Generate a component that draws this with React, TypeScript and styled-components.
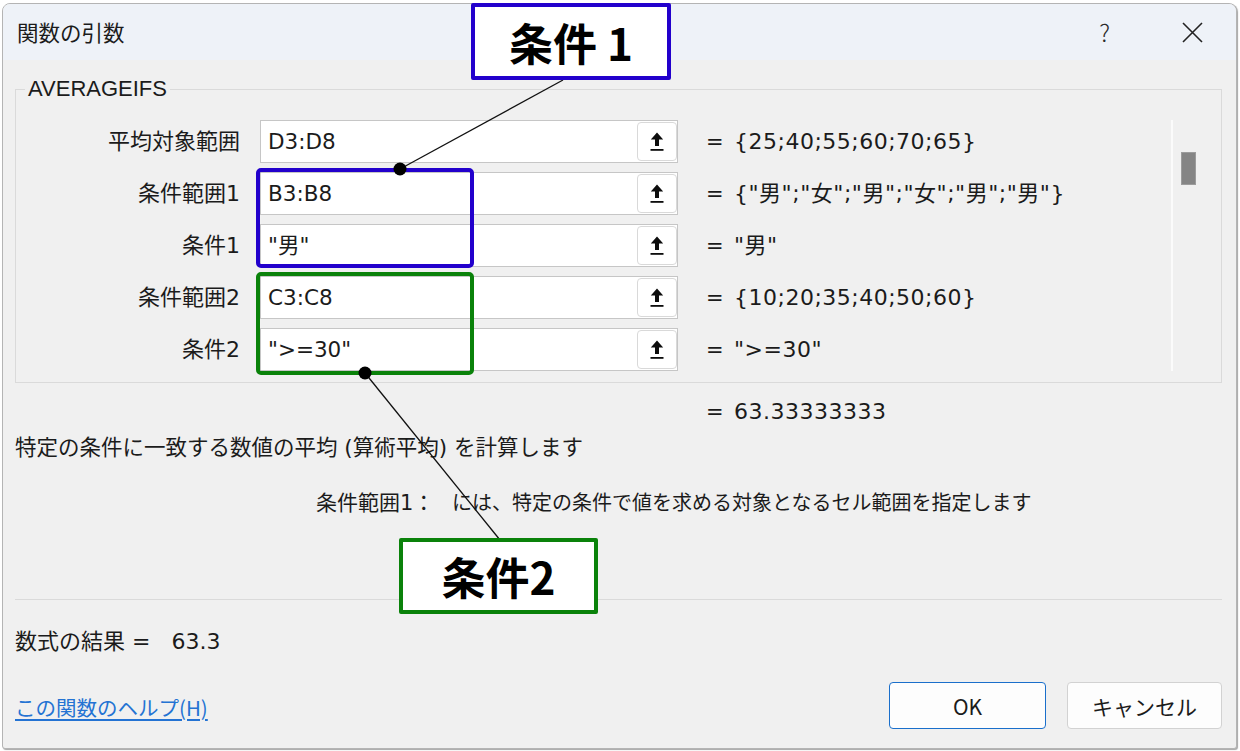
import React from 'react';
import styled, { createGlobalStyle } from 'styled-components';

const GlobalStyle = createGlobalStyle`
  html, body { margin: 0; padding: 0; background: #ffffff; }
  body {
    width: 1240px; height: 751px; overflow: hidden;
    font-family: "DejaVu Sans", "Noto Sans CJK JP", sans-serif;
    color: #1b1b1b;
  }
  * { box-sizing: border-box; }
`;

const Page = styled.div`
  position: relative;
  width: 1240px;
  height: 751px;
  padding: 3px 3px 2px 2px;
  display: flex;
`;

const Dialog = styled.div`
  flex: 1;
  display: flex;
  flex-direction: column;
  border: 1px solid #b4b4b4;
  border-radius: 8px 8px 3px 3px;
  background: #f0f0f0;
  box-shadow: 1px 1px 1px rgba(0, 0, 0, 0.35);
  overflow: hidden;
`;

const TitleBar = styled.div`
  height: 56px;
  flex: none;
  display: flex;
  align-items: center;
  padding: 0 33px 0 14px;
  background: #eef2f8;
`;

const TitleText = styled.div`
  flex: 1;
  font-size: 21.5px;
  line-height: 26px;
  font-family: "Noto Sans CJK JP", sans-serif;
`;

const HelpGlyph = styled.div`
  font-family: "Noto Sans CJK JP", sans-serif;
  font-weight: 300;
  font-size: 24px;
  line-height: 26px;
  color: #2a2a2a;
  margin-right: 72px;
`;

const CloseIcon = styled.svg`
  width: 21px;
  height: 21px;
  display: block;
`;

const Body = styled.div`
  flex: 1;
  display: flex;
  flex-direction: column;
  padding: 0 14px 0 12px;
`;

const Group = styled.fieldset`
  margin: 17px 0 0;
  padding: 19px 0 11px 0;
  border: 1px solid #dadada;
  display: flex;
  min-width: 0;
`;

const Legend = styled.legend`
  margin-left: 9px;
  padding: 0 3px;
  font-size: 22px;
  line-height: 24px;
  font-family: "Liberation Sans", "Noto Sans CJK JP", sans-serif;
  color: #1b1b1b;
`;

const Rows = styled.div`
  flex: 1;
  display: flex;
  flex-direction: column;
  gap: 9px;
`;

const Row = styled.div`
  height: 43px;
  display: flex;
  align-items: center;
`;

const Label = styled.div`
  width: 224px;
  text-align: right;
  font-size: 22px;
  line-height: 26px;
  margin-right: 20px;
  white-space: nowrap;
`;

const InputBox = styled.div`
  width: 418px;
  height: 43px;
  display: flex;
  align-items: center;
  padding: 0 0 0 7px;
  background: #ffffff;
  border: 1px solid #c6c6c6;
`;

const InputText = styled.div`
  flex: 1;
  font-size: 21.5px;
  line-height: 26px;
  white-space: pre;
`;

const RefButton = styled.div`
  width: 40px;
  height: 39px;
  display: flex;
  align-items: center;
  justify-content: center;
  background: #ffffff;
  border: 1px solid #d9d9d9;
  border-radius: 4px;
`;

const Eq = styled.div<{ $gap?: number }>`
  width: 14px;
  margin-left: ${(p) => p.$gap ?? 28}px;
  font-size: 21px;
  line-height: 26px;
  text-align: center;
`;

const Value = styled.div`
  flex: 1;
  margin-left: 14px;
  font-size: 22px;
  letter-spacing: 0.5px;
  line-height: 26px;
  white-space: pre;
`;

const Track = styled.div`
  width: 50px;
  flex: none;
  border-left: 2px solid #fbfbfb;
  padding: 32px 0 0 8px;
`;

const Thumb = styled.div`
  width: 15px;
  height: 33px;
  background: #858585;
  border: 1px solid #9c9c9c;
`;

const ResultRow = styled.div`
  display: flex;
  margin-top: 16px;
  padding-left: 691px;
`;

const TextLine = styled.div<{ $top: number; $size?: number }>`
  margin-top: ${(p) => p.$top}px;
  font-size: ${(p) => p.$size ?? 21}px;
  line-height: 26px;
  white-space: pre;
`;

const ArgHelp = styled.div`
  margin-top: 29px;
  padding-left: 301px;
  display: flex;
  font-size: 20px;
  line-height: 26px;
  white-space: pre;
`;

const ArgName = styled.span`
  width: 136px;
  flex: none;
  font-size: 21px;
`;

const Separator = styled.div`
  margin-top: 83px;
  height: 1px;
  background: #dadada;
`;

const Footer = styled.div`
  margin-top: 27px;
  display: flex;
  align-items: center;
  height: 47px;
`;

const HelpLink = styled.a`
  flex: 1;
  font-family: "Noto Sans CJK JP", sans-serif;
  font-size: 20.5px;
  line-height: 26px;
  color: #2473d3;
  text-decoration: underline;
  text-underline-offset: 3px;
  margin-top: 3px;
`;

const Button = styled.button<{ $primary?: boolean; $w: number }>`
  width: ${(p) => p.$w}px;
  height: 47px;
  margin-left: ${(p) => (p.$primary ? 0 : 21)}px;
  background: #fdfdfd;
  border: 1px solid ${(p) => (p.$primary ? '#1a6fcb' : '#d2d2d2')};
  border-radius: 4px;
  font-family: "Noto Sans CJK JP", sans-serif;
  font-size: 21px;
  color: #1b1b1b;
  padding: 0;
`;

const Overlay = styled.svg`
  position: absolute;
  left: 0;
  top: 0;
  width: 1240px;
  height: 751px;
  pointer-events: none;
`;

const Callout = styled.div<{ $x: number; $y: number; $w: number; $h: number; $color: string }>`
  position: absolute;
  left: ${(p) => p.$x}px;
  top: ${(p) => p.$y}px;
  width: ${(p) => p.$w}px;
  height: ${(p) => p.$h}px;
  border: 4px solid ${(p) => p.$color};
  border-radius: 2px;
  background: #ffffff;
  display: flex;
  align-items: center;
  justify-content: center;
  font-family: "Noto Sans CJK JP", sans-serif;
  font-weight: 700;
  font-size: 44px;
  line-height: 1;
  color: #000;
  white-space: pre;
`;

const RefIcon = () => (
  <svg width="14" height="20" viewBox="0 0 14 20">
    <path d="M7 0.5 L13.2 7.5 L9 7.5 L9 14 L5 14 L5 7.5 L0.8 7.5 Z" fill="#0d0d0d" />
    <rect x="0.5" y="17" width="13" height="1.8" fill="#0d0d0d" />
  </svg>
);

const args = [
  { label: '平均対象範囲', input: 'D3:D8', value: '{25;40;55;60;70;65}' },
  { label: '条件範囲1', input: 'B3:B8', value: '{"男";"女";"男";"女";"男";"男"}' },
  { label: '条件1', input: '"男"', value: '"男"' },
  { label: '条件範囲2', input: 'C3:C8', value: '{10;20;35;40;50;60}' },
  { label: '条件2', input: '">=30"', value: '">=30"' },
];

const BLUE = '#2200cc';
const GREEN = '#0a820a';

export default function App() {
  return (
    <>
      <GlobalStyle />
      <Page>
        <Dialog>
          <TitleBar>
            <TitleText>関数の引数</TitleText>
            <HelpGlyph>?</HelpGlyph>
            <CloseIcon viewBox="0 0 21 21">
              <path d="M1 1 L20 20 M20 1 L1 20" stroke="#222" strokeWidth="1.6" />
            </CloseIcon>
          </TitleBar>
          <Body>
            <Group>
              <Legend>AVERAGEIFS</Legend>
              <Rows>
                {args.map((a) => (
                  <Row key={a.label}>
                    <Label>{a.label}</Label>
                    <InputBox>
                      <InputText>{a.input}</InputText>
                      <RefButton>
                        <RefIcon />
                      </RefButton>
                    </InputBox>
                    <Eq>=</Eq>
                    <Value>{a.value}</Value>
                  </Row>
                ))}
              </Rows>
              <Track>
                <Thumb />
              </Track>
            </Group>
            <ResultRow>
              <Eq $gap={0}>=</Eq>
              <Value>63.33333333</Value>
            </ResultRow>
            <TextLine $top={10} $size={21.5}>特定の条件に一致する数値の平均 (算術平均) を計算します</TextLine>
            <ArgHelp>
              <ArgName>条件範囲1：</ArgName>
              <span>には、特定の条件で値を求める対象となるセル範囲を指定します</span>
            </ArgHelp>
            <Separator />
            <TextLine $top={29} $size={22}>数式の結果 =   63.3</TextLine>
            <Footer>
              <HelpLink href="#">この関数のヘルプ(H)</HelpLink>
              <Button $primary $w={157}>OK</Button>
              <Button $w={155}>キャンセル</Button>
            </Footer>
          </Body>
        </Dialog>
        <Overlay viewBox="0 0 1240 751">
          <line x1="400" y1="169" x2="563" y2="80" stroke="#111" strokeWidth="1.3" />
          <line x1="365" y1="373" x2="500" y2="540" stroke="#111" strokeWidth="1.3" />
          <rect x="258" y="170" width="214" height="96" rx="3" fill="none" stroke={BLUE} strokeWidth="4" />
          <rect x="258" y="274" width="214" height="99" rx="3" fill="none" stroke={GREEN} strokeWidth="4" />
          <circle cx="400" cy="169" r="6.5" fill="#000" />
          <circle cx="365" cy="373" r="6.5" fill="#000" />
        </Overlay>
        <Callout $x={471} $y={3} $w={200} $h={77} $color={BLUE}>条件 1</Callout>
        <Callout $x={399} $y={538} $w={199} $h={76} $color={GREEN}>条件2</Callout>
      </Page>
    </>
  );
}
